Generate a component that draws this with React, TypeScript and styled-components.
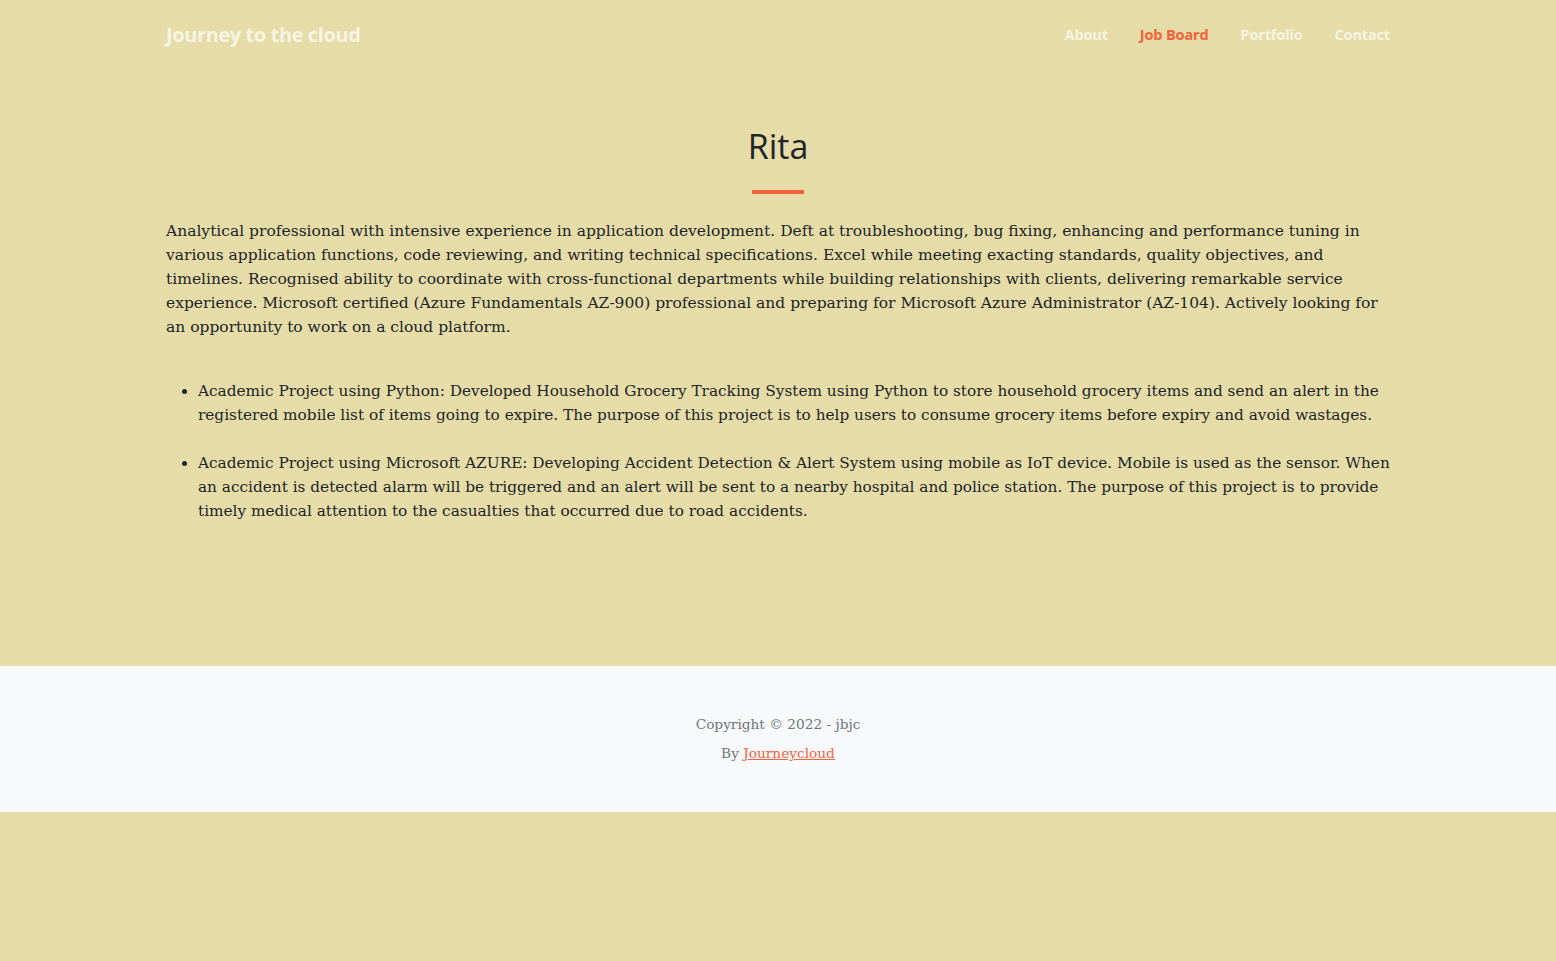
import React from 'react'
import styled, { createGlobalStyle } from 'styled-components'

const GlobalStyle = createGlobalStyle`
  html, body {
    margin: 0;
    padding: 0;
    background: #e6dca8;
  }
  body {
    font-family: 'DejaVu Serif', 'Liberation Serif', serif;
    color: #212529;
  }
  * {
    box-sizing: border-box;
  }
`

const Container = styled.div`
  width: 1224px;
  margin: 0 auto;
`

const NavBar = styled.nav`
  height: 68px;
`

const NavInner = styled(Container)`
  display: flex;
  justify-content: space-between;
  align-items: center;
  height: 100%;
`

const Brand = styled.a`
  font-family: 'Open Sans', 'Noto Sans', sans-serif;
  font-weight: 700;
  font-size: 20px;
  letter-spacing: -0.4px;
  color: rgba(255, 255, 255, 0.7);
  text-decoration: none;
  margin-top: 1px;
`

const NavList = styled.ul`
  display: flex;
  gap: 32px;
  list-style: none;
  margin: 0;
  padding: 0;
`

const NavLink = styled.a<{ $active?: boolean }>`
  font-family: 'Open Sans', 'Noto Sans', sans-serif;
  font-weight: 700;
  font-size: 14.6px;
  letter-spacing: -0.2px;
  color: ${({ $active }) => ($active ? '#f4623a' : 'rgba(255, 255, 255, 0.7)')};
  text-decoration: none;
`

const Main = styled.main`
  padding: 58px 0 143px;
`

const Title = styled.h2`
  font-family: 'Open Sans', 'Noto Sans', sans-serif;
  font-weight: 400;
  font-size: 34px;
  text-align: center;
  margin: 0;
  line-height: 1.2;
`

const Divider = styled.hr`
  width: 52px;
  height: 4px;
  border: 0;
  background: #f4623a;
  margin: 23px auto 25px;
`

const Summary = styled.p`
  font-size: 15.5px;
  line-height: 24px;
  margin: 0 0 40px;
`

const Projects = styled.ul`
  margin: 0;
  padding-left: 32px;
`

const Project = styled.li`
  font-size: 15.3px;
  line-height: 24px;
  & + & {
    margin-top: 24px;
  }
`

const Footer = styled.footer`
  background: #f8f9fa;
  padding: 44px 0 44px;
  text-align: center;
  font-size: 13.7px;
  color: #6c757d;
`

const FooterLine = styled.div`
  line-height: 29px;
`

const FooterLink = styled.a`
  color: #f4623a;
  text-decoration: underline;
`

export default function App() {
  return (
    <>
      <GlobalStyle />
      <NavBar>
        <NavInner>
          <Brand href="#">Journey to the cloud</Brand>
          <NavList>
            <li><NavLink href="#">About</NavLink></li>
            <li><NavLink href="#" $active>Job Board</NavLink></li>
            <li><NavLink href="#">Portfolio</NavLink></li>
            <li><NavLink href="#">Contact</NavLink></li>
          </NavList>
        </NavInner>
      </NavBar>
      <Main>
        <Container>
          <Title>Rita</Title>
          <Divider />
          <Summary>
            Analytical professional with intensive experience in application development. Deft at troubleshooting, bug fixing, enhancing and performance tuning in various application functions, code reviewing, and writing technical specifications. Excel while meeting exacting standards, quality objectives, and timelines. Recognised ability to coordinate with cross-functional departments while building relationships with clients, delivering remarkable service experience. Microsoft certified (Azure Fundamentals AZ-900) professional and preparing for Microsoft Azure Administrator (AZ-104). Actively looking for an opportunity to work on a cloud platform.
          </Summary>
          <Projects>
            <Project>
              Academic Project using Python: Developed Household Grocery Tracking System using Python to store household grocery items and send an alert in the registered mobile list of items going to expire. The purpose of this project is to help users to consume grocery items before expiry and avoid wastages.
            </Project>
            <Project>
              Academic Project using Microsoft AZURE: Developing Accident Detection &amp; Alert System using mobile as IoT device. Mobile is used as the sensor. When an accident is detected alarm will be triggered and an alert will be sent to a nearby hospital and police station. The purpose of this project is to provide timely medical attention to the casualties that occurred due to road accidents.
            </Project>
          </Projects>
        </Container>
      </Main>
      <Footer>
        <FooterLine>Copyright © 2022 - jbjc</FooterLine>
        <FooterLine>
          By <FooterLink href="#">Journeycloud</FooterLink>
        </FooterLine>
      </Footer>
    </>
  )
}
